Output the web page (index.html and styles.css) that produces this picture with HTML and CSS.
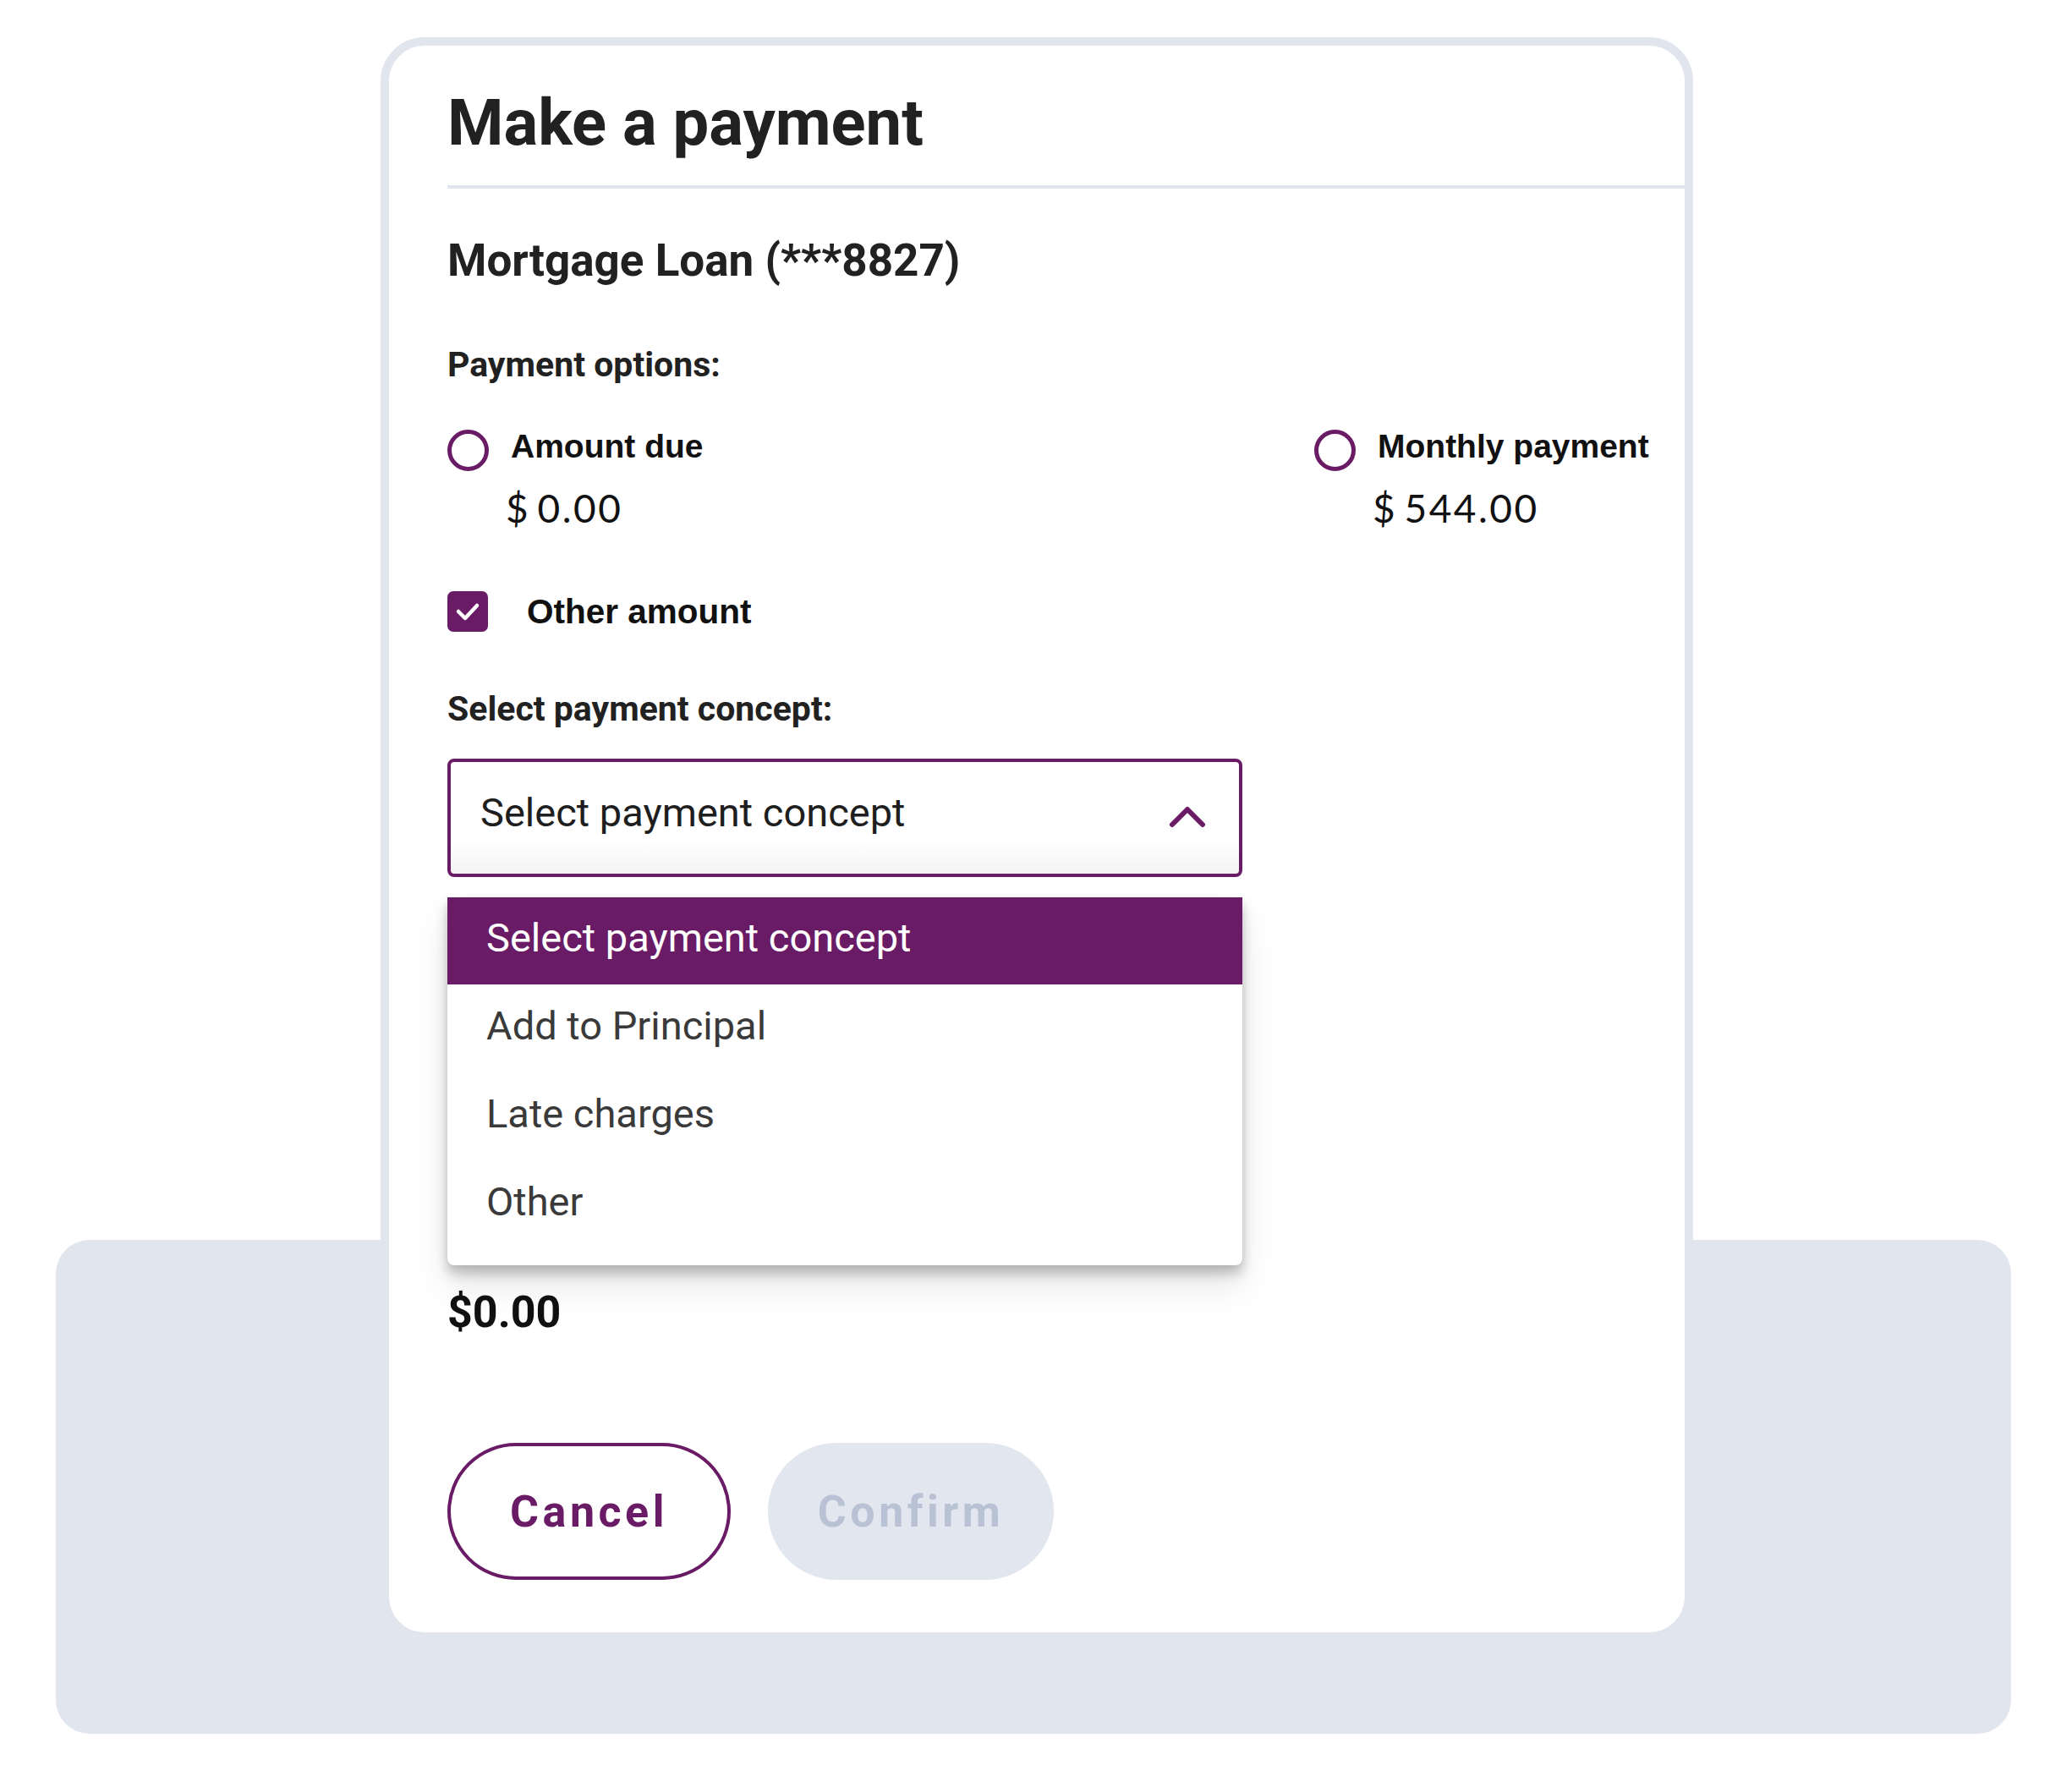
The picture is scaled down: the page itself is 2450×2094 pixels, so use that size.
FILE: index.html
```html
<!DOCTYPE html>
<html lang="en">
<head>
<meta charset="utf-8">
<title>Make a payment</title>
<link rel="stylesheet" href="styles.css">
</head>
<body>
<div class="page">
  <div class="backdrop"></div>
  <section class="card">
    <header class="card-head">
      <h1 class="title">Make a payment</h1>
    </header>
    <div class="card-body">
      <h2 class="account">Mortgage Loan (***8827)</h2>
      <p class="field-label">Payment options:</p>
      <div class="options">
        <div class="option">
          <span class="radio"></span>
          <div class="option-text">
            <div class="option-label">Amount due</div>
            <div class="option-amount">$ 0.00</div>
          </div>
        </div>
        <div class="option">
          <span class="radio"></span>
          <div class="option-text">
            <div class="option-label">Monthly payment</div>
            <div class="option-amount">$ 544.00</div>
          </div>
        </div>
      </div>
      <div class="check-row">
        <span class="checkbox">
          <svg viewBox="0 0 48 48" width="48" height="48"><polyline points="13,24 21,32 35,17" fill="none" stroke="#fff" stroke-width="4.5" stroke-linecap="round" stroke-linejoin="round"/></svg>
        </span>
        <span class="check-label">Other amount</span>
      </div>
      <p class="field-label field-label-concept">Select payment concept:</p>
      <div class="select-wrap">
        <div class="select">
          <span class="select-value">Select payment concept</span>
          <svg class="chevron" viewBox="0 0 44 28" width="44" height="28"><polyline points="4,24 22,6 40,24" fill="none" stroke="#6a1b65" stroke-width="6" stroke-linecap="round" stroke-linejoin="round"/></svg>
        </div>
        <ul class="menu">
          <li class="menu-item is-active">Select payment concept</li>
          <li class="menu-item">Add to Principal</li>
          <li class="menu-item">Late charges</li>
          <li class="menu-item">Other</li>
        </ul>
      </div>
      <div class="total">$0.00</div>
      <div class="actions">
        <button class="btn btn-outline">Cancel</button>
        <button class="btn btn-disabled">Confirm</button>
      </div>
    </div>
  </section>
</div>
</body>
</html>
```
FILE: styles.css
```css
* { box-sizing: border-box; }
html, body { margin: 0; padding: 0; background: #ffffff; }
body { font-family: "Roboto", "Liberation Sans", sans-serif; color: #222222; }

.page {
  display: grid;
  grid-template-columns: 2312px;
  padding: 44px 0 0 66px;
}

.backdrop {
  grid-area: 1 / 1;
  align-self: end;
  height: 584px;
  background: #e1e5ee;
  border-radius: 40px;
}

.card {
  grid-area: 1 / 1;
  justify-self: start;
  width: 1552px;
  margin: 0 0 110px 384px;
  background: #ffffff;
  border: 10px solid #e1e5ee;
  border-radius: 52px;
  padding: 0 0 62px 69px;
}

.card-head {
  padding: 46px 0 29px;
  border-bottom: 4px solid #e1e5ee;
}

.title {
  margin: 0;
  font-size: 76px;
  line-height: 90px;
  font-weight: 700;
  color: #212121;
}

.account {
  margin: 53px 0 0;
  font-size: 53px;
  line-height: 64px;
  font-weight: 700;
  color: #212121;
}

.field-label {
  margin: 67px 0 0;
  font-size: 41px;
  line-height: 48px;
  font-weight: 700;
  color: #212121;
}

.options {
  margin-top: 53px;
  display: grid;
  grid-template-columns: 1025px auto;
}

.option {
  display: flex;
  align-items: flex-start;
  gap: 26px;
}

.radio {
  flex: none;
  width: 49px;
  height: 49px;
  border: 5px solid #6a1b65;
  border-radius: 50%;
}

.option-label {
  font-family: "Liberation Sans", Arial, sans-serif;
  font-weight: 700;
  font-size: 39px;
  line-height: 39px;
  color: #111111;
}

.option-amount {
  margin: 28px 0 0 -6px;
  font-family: "Lato", "Open Sans", sans-serif;
  font-size: 46px;
  line-height: 52px;
  letter-spacing: 2.5px;
  word-spacing: -6px;
  color: #111111;
}

.check-row {
  margin-top: 72px;
  display: flex;
  align-items: center;
  gap: 46px;
  height: 48px;
}

.checkbox {
  flex: none;
  width: 48px;
  height: 48px;
  border-radius: 7px;
  background: #6a1b65;
  display: flex;
}

.check-label {
  font-family: "Liberation Sans", Arial, sans-serif;
  font-weight: 700;
  font-size: 40.5px;
  line-height: 48px;
  color: #111111;
}

.field-label-concept { margin-top: 67px; }

.select-wrap {
  position: relative;
  margin-top: 35px;
  width: 940px;
}

.select {
  height: 140px;
  border: 4px solid #6a1b65;
  border-radius: 8px;
  display: flex;
  align-items: flex-start;
  justify-content: space-between;
  padding: 33px 39px 0 35px;
  background: linear-gradient(to bottom, #ffffff 70%, #f3f3f3 100%);
}

.select-value {
  font-size: 47px;
  line-height: 54px;
  font-weight: 400;
  color: #1e1e1e;
}

.chevron { margin-top: 17px; }

.menu {
  position: absolute;
  z-index: 5;
  top: calc(100% + 24px);
  left: 0;
  width: 100%;
  margin: 0;
  padding: 0 0 20px;
  list-style: none;
  background: #ffffff;
  border-radius: 0 0 8px 8px;
  box-shadow: 0 10px 14px rgba(0, 0, 0, 0.22), 0 24px 40px rgba(0, 0, 0, 0.10), 0 0 6px rgba(0, 0, 0, 0.06);
}

.menu-item {
  height: 104px;
  padding: 0 0 0 46px;
  font-size: 47px;
  line-height: 98px;
  color: #3a3a3a;
}

.menu-item.is-active {
  background: #6a1b65;
  color: #ffffff;
  height: 103px;
  line-height: 96px;
}

.total {
  margin-top: 484px;
  font-size: 52px;
  line-height: 62px;
  font-weight: 700;
  color: #111111;
}

.actions {
  margin-top: 123px;
  display: flex;
  gap: 44px;
}

.btn {
  height: 162px;
  border-radius: 81px;
  font-family: "Roboto", "Liberation Sans", sans-serif;
  font-size: 52px;
  font-weight: 700;
  letter-spacing: 4.5px;
  padding: 0;
}

.btn-outline {
  width: 335px;
  background: #ffffff;
  border: 4px solid #6a1b65;
  color: #6a1b65;
}

.btn-disabled {
  width: 338px;
  background: #e2e6ef;
  border: none;
  color: #b9c2d4;
}
```
